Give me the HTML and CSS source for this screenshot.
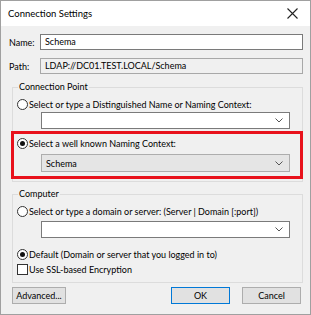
FILE: index.html
```html
<!DOCTYPE html>
<html lang="en">
<head>
    <meta charset="UTF-8">
    <title>Connection Settings</title>
    <link rel="stylesheet" href="styles.css">
</head>
<body>
    <div class="window">
        <div class="titlebar">
            <span class="title">Connection Settings</span>
            <svg class="close" width="11" height="11" viewBox="0 0 11 11">
                <path d="M0.5 0.5 L10.5 10.5 M10.5 0.5 L0.5 10.5" stroke="#222" stroke-width="1.1" fill="none"/>
            </svg>
        </div>

        <div class="content">
            <div class="field-row">
                <label class="field-label">Name:</label>
                <div class="textbox">Schema</div>
            </div>
            <div class="field-row">
                <label class="field-label">Path:</label>
                <div class="textbox readonly">LDAP://DC01.TEST.LOCAL/Schema</div>
            </div>

            <fieldset class="group group-connection">
                <legend>Connection Point</legend>
                <div class="option">
                    <span class="radio"></span>
                    <span>Select or type a Distinguished Name or Naming Context:</span>
                </div>
                <div class="combo"><span></span><svg class="chev" width="8" height="5" viewBox="0 0 8 5"><path d="M0.5 0.5 L4 4 L7.5 0.5" stroke="#555" fill="none"/></svg></div>

                <div class="highlight">
                    <div class="option">
                        <span class="radio checked"></span>
                        <span>Select a well known Naming Context:</span>
                    </div>
                    <div class="combo disabled"><span>Schema</span><svg class="chev" width="8" height="5" viewBox="0 0 8 5"><path d="M0.5 0.5 L4 4 L7.5 0.5" stroke="#555" fill="none"/></svg></div>
                </div>
            </fieldset>

            <fieldset class="group group-computer">
                <legend>Computer</legend>
                <div class="option">
                    <span class="radio"></span>
                    <span>Select or type a domain or server: (Server | Domain [:port])</span>
                </div>
                <div class="combo combo-server"><span></span><svg class="chev" width="8" height="5" viewBox="0 0 8 5"><path d="M0.5 0.5 L4 4 L7.5 0.5" stroke="#555" fill="none"/></svg></div>
                <div class="option option-default">
                    <span class="radio checked"></span>
                    <span>Default (Domain or server that you logged in to)</span>
                </div>
                <div class="option option-check">
                    <span class="checkbox"></span>
                    <span>Use SSL-based Encryption</span>
                </div>
            </fieldset>

            <div class="buttons">
                <button class="btn btn-advanced">Advanced...</button>
                <div class="spacer"></div>
                <button class="btn btn-ok">OK</button>
                <button class="btn btn-cancel">Cancel</button>
            </div>
        </div>
    </div>
</body>
</html>
```

FILE: styles.css
```css
body {
    margin: 0;
    padding: 0;
    background-color: #ffffff;
    font-family: Lato, "Noto Sans", sans-serif;
    font-size: 9px;
    color: #000;
}

.window {
    width: 311px;
    height: 315px;
    box-sizing: border-box;
    border: 1px solid #a0a0a0;
    background-color: #f0f0f0;
}

.titlebar {
    height: 25px;
    background-color: #fff;
    display: flex;
    align-items: center;
    justify-content: space-between;
    padding: 0 12px 0 7px;
}

.title {
    font-size: 9.5px;
}

.content {
    padding: 8px 7px 0 8px;
}

.field-row {
    display: flex;
    align-items: center;
    height: 16px;
    margin-bottom: 8px;
}

.field-label {
    width: 31px;
}

.textbox {
    flex: 1;
    height: 16px;
    box-sizing: border-box;
    border: 1px solid #7a7a7a;
    background-color: #fff;
    padding: 0 4px;
    line-height: 14px;
}

.textbox.readonly {
    background-color: #f0f0f0;
    border-color: #a8a8a8;
}

.group {
    margin: 0 0 0 3px;
    padding: 0 0 4px 4px;
    border: 1px solid #dcdcdc;
    min-width: 0;
}

.group legend {
    padding: 0 1px;
    margin-left: 1px;
    line-height: 14px;
}

.group-connection {
    margin-top: -2px;
    padding-bottom: 2px;
}

.group-computer {
    margin-top: 5px;
    padding-bottom: 5px;
}

.option {
    display: flex;
    align-items: center;
    gap: 1px;
    height: 16px;
    margin-top: 2px;
}

.radio {
    width: 11px;
    height: 11px;
    box-sizing: border-box;
    border: 1px solid #333;
    border-radius: 50%;
    background-color: #fff;
    display: flex;
    align-items: center;
    justify-content: center;
}

.radio.checked::after {
    content: "";
    width: 5px;
    height: 5px;
    border-radius: 50%;
    background-color: #111;
}

.checkbox {
    width: 11px;
    height: 11px;
    box-sizing: border-box;
    border: 1px solid #333;
    background-color: #fff;
}

.combo {
    margin: 0 12px 0 24px;
    height: 17px;
    box-sizing: border-box;
    border: 1px solid #7a7a7a;
    background-color: #fff;
    display: flex;
    align-items: center;
    justify-content: space-between;
    padding: 0 6px 0 4px;
}

.combo-server {
    margin-top: 2px;
}

.combo.disabled {
    background-color: #e5e5e5;
    border-color: #adadad;
}

.highlight {
    margin: 2px -1px 0 -6px;
    border: 3px solid #e8111b;
    padding: 0 0 4px 3px;
}

.highlight .option {
    margin-top: 1px;
}

.highlight .combo {
    height: 18px;
    margin-top: 3px;
    margin-right: 10px;
}

.option-default {
    margin-top: 8px;
}

.option-check {
    margin-top: -1px;
}

.buttons {
    display: flex;
    margin-top: 4px;
    gap: 12px;
    padding-left: 3px;
}

.spacer {
    flex: 1;
}

.btn {
    height: 17px;
    font-family: Lato, "Noto Sans", sans-serif;
    font-size: 9px;
    background-color: #e1e1e1;
    border: 1px solid #adadad;
    padding: 0;
}

.btn-advanced {
    width: 54px;
}

.btn-ok {
    width: 59px;
    border-color: #0078d7;
}

.btn-cancel {
    width: 59px;
    margin-right: 2px;
}
```
